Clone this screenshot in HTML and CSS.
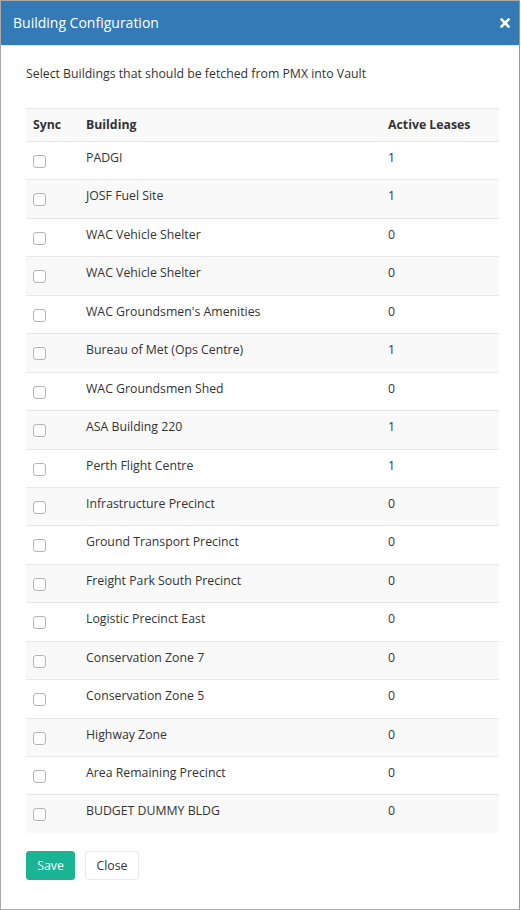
FILE: index.html
```html
<!DOCTYPE html>
<html>
<head>
<meta charset="utf-8">
<title>Building Configuration</title>
<link rel="stylesheet" href="styles.css">
</head>
<body>
<div class="modal">
  <div class="modal-header">
    <h4 class="modal-title">Building Configuration</h4>
    <button class="close" type="button" aria-label="Close">
      <svg width="10" height="10" viewBox="0 0 10 10"><path d="M1.5 1.5 L8.5 8.5 M8.5 1.5 L1.5 8.5" stroke="#fff" stroke-width="2.6" stroke-linecap="square"/></svg>
    </button>
  </div>
  <div class="modal-body">
    <p class="intro">Select Buildings that should be fetched from PMX into Vault</p>
    <table class="table">
      <tbody>
        <tr class="head-row"><th class="col-sync">Sync</th><th class="col-name">Building</th><th class="col-leases">Active Leases</th></tr>
        <tr><td><span class="check"></span></td><td>PADGI</td><td>1</td></tr>
        <tr><td><span class="check"></span></td><td>JOSF Fuel Site</td><td>1</td></tr>
        <tr><td><span class="check"></span></td><td>WAC Vehicle Shelter</td><td>0</td></tr>
        <tr><td><span class="check"></span></td><td>WAC Vehicle Shelter</td><td>0</td></tr>
        <tr><td><span class="check"></span></td><td>WAC Groundsmen's Amenities</td><td>0</td></tr>
        <tr><td><span class="check"></span></td><td>Bureau of Met (Ops Centre)</td><td>1</td></tr>
        <tr><td><span class="check"></span></td><td>WAC Groundsmen Shed</td><td>0</td></tr>
        <tr><td><span class="check"></span></td><td>ASA Building 220</td><td>1</td></tr>
        <tr><td><span class="check"></span></td><td>Perth Flight Centre</td><td>1</td></tr>
        <tr><td><span class="check"></span></td><td>Infrastructure Precinct</td><td>0</td></tr>
        <tr><td><span class="check"></span></td><td>Ground Transport Precinct</td><td>0</td></tr>
        <tr><td><span class="check"></span></td><td>Freight Park South Precinct</td><td>0</td></tr>
        <tr><td><span class="check"></span></td><td>Logistic Precinct East</td><td>0</td></tr>
        <tr><td><span class="check"></span></td><td>Conservation Zone 7</td><td>0</td></tr>
        <tr><td><span class="check"></span></td><td>Conservation Zone 5</td><td>0</td></tr>
        <tr><td><span class="check"></span></td><td>Highway Zone</td><td>0</td></tr>
        <tr><td><span class="check"></span></td><td>Area Remaining Precinct</td><td>0</td></tr>
        <tr><td><span class="check"></span></td><td>BUDGET DUMMY BLDG</td><td>0</td></tr>
      </tbody>
    </table>
    <div class="actions">
      <button class="btn btn-primary" type="button">Save</button>
      <button class="btn btn-white" type="button">Close</button>
    </div>
  </div>
</div>
</body>
</html>
```
FILE: styles.css
```css
html, body {
  margin: 0;
  padding: 0;
  background: #fff;
}

body {
  font-family: "Open Sans", "Liberation Sans", sans-serif;
  font-size: 12.3px;
  line-height: 18px;
  color: #333;
}

.modal {
  box-sizing: border-box;
  width: 520px;
  height: 910px;
  border: 1px solid #a9a9a9;
  border-right-color: #9a9a9a;
  background: #fff;
}

.modal-header {
  display: flex;
  align-items: center;
  justify-content: space-between;
  height: 44px;
  padding: 0 6px 0 12px;
  background: #337ab7;
  border-bottom: 1px solid #e5e5e5;
}

.modal-title {
  margin: 0;
  font-size: 14px;
  font-weight: 400;
  color: #fff;
  line-height: 20px;
}

.close {
  display: flex;
  align-items: center;
  justify-content: center;
  width: 16px;
  height: 20px;
  padding: 0;
  border: 0;
  background: transparent;
}

.modal-body {
  padding: 19px 20px 0 25px;
}

.intro {
  margin: 0 0 25px;
}

.table {
  width: 473px;
  border-collapse: collapse;
  border-spacing: 0;
}

.table th,
.table td {
  padding: 7px 8px 0;
  text-align: left;
  vertical-align: top;
  border-top: 1px solid #e7e7e7;
}

.table th:first-child,
.table td:first-child {
  padding-left: 7px;
}

.table th {
  font-weight: 700;
}

.table tr {
  height: 38.44px;
}

.table tr.head-row {
  height: 33px;
}

.table tbody tr:nth-of-type(odd) {
  background: #f9f9f9;
}

.col-sync {
  width: 37px;
}

.col-name {
  width: 286px;
}

.check {
  display: block;
  box-sizing: border-box;
  width: 13px;
  height: 13px;
  margin-top: 6px;
  border: 1px solid #b4b4b4;
  border-radius: 3px;
  background: #fff;
}

.actions {
  display: flex;
  gap: 10px;
  margin-top: 18px;
}

.btn {
  box-sizing: border-box;
  height: 29px;
  padding: 0 10px;
  border-radius: 3px;
  font-family: inherit;
  font-size: 12.3px;
  line-height: 27px;
  cursor: pointer;
}

.btn-primary {
  width: 49px;
  background: #1ab394;
  border: 1px solid #1ab394;
  color: #fff;
}

.btn-white {
  width: 54px;
  background: #fff;
  border: 1px solid #e7eaec;
  color: #333;
}
```
